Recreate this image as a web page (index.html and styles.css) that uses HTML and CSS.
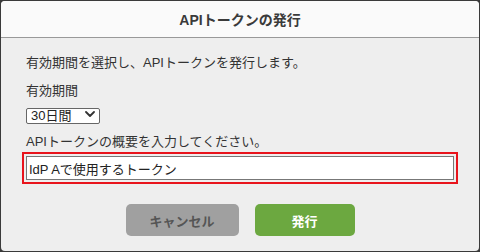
FILE: index.html
```html
<!DOCTYPE html>
<html>
	<head>
		<meta charset="UTF-8">
		<title>APIトークンの発行</title>
		<link rel="stylesheet" href="styles.css">
	</head>
	<body>
		<div class="dialog">
			<div class="dialog-header">APIトークンの発行</div>
			<form class="dialog-body" action="" method="post">
				<p class="line intro">有効期間を選択し、APIトークンを発行します。</p>
				<label class="line term-label" for="term">有効期間</label>
				<div class="select-wrap">
					<select id="term" name="term">
						<option>30日間</option>
						<option>60日間</option>
						<option>90日間</option>
					</select>
					<svg class="chevron" width="10" height="6" viewBox="0 0 10 6">
						<path d="M1 1 L5 5 L9 1" fill="none" stroke="#333" stroke-width="1.8" stroke-linecap="round" stroke-linejoin="round"/>
					</svg>
				</div>
				<label class="line desc-label" for="desc">APIトークンの概要を入力してください。</label>
				<div class="highlight">
					<input type="text" id="desc" name="desc" value="IdP Aで使用するトークン">
				</div>
				<div class="buttons">
					<button type="button" class="btn cancel">キャンセル</button>
					<button type="submit" class="btn submit">発行</button>
				</div>
			</form>
		</div>
	</body>
</html>
```

FILE: styles.css
```css
* {
	margin: 0;
	padding: 0;
	box-sizing: border-box;
}
body {
	background-color: #3a3a3a;
	font-family: "Liberation Sans", "Noto Sans CJK JP", sans-serif;
	color: #333;
}
.dialog {
	margin: 1px;
	width: 478px;
	height: 250px;
	border-radius: 4px;
	overflow: hidden;
	background-color: #eeeeee;
}
.dialog-header {
	height: 37px;
	display: flex;
	align-items: center;
	justify-content: center;
	background-color: #fafafa;
	border-bottom: 1px solid #999;
	font-size: 14px;
	font-weight: bold;
	color: #3a3a3a;
}
.dialog-body {
	display: flex;
	flex-direction: column;
	align-items: flex-start;
	padding: 16px 21px 0;
}
.line {
	display: block;
	margin-left: 4px;
	font-size: 13px;
	line-height: 18px;
}
.term-label {
	margin-top: 10px;
}
.select-wrap {
	position: relative;
	margin: 6px 0 0 4px;
	width: 74px;
	height: 16px;
}
.select-wrap select {
	appearance: none;
	-webkit-appearance: none;
	width: 74px;
	height: 16px;
	padding: 0 0 0 4px;
	border: 1px solid #666;
	border-radius: 2px;
	background-color: #fff;
	font-family: inherit;
	font-size: 13px;
	line-height: 14px;
	color: #222;
}
.chevron {
	position: absolute;
	left: 59px;
	top: 5px;
	pointer-events: none;
}
.desc-label {
	margin-top: 11px;
}
.highlight {
	margin-top: 1px;
	width: 436px;
	height: 32px;
	padding: 2px;
	border: 2px solid #e8141c;
}
.highlight input {
	display: block;
	width: 100%;
	height: 24px;
	padding: 0 2px;
	border: 1px solid #777;
	background-color: #fff;
	font-family: inherit;
	font-size: 13px;
	color: #222;
	outline: none;
}
.buttons {
	align-self: stretch;
	display: flex;
	justify-content: center;
	gap: 16px;
	margin-top: 20px;
}
.btn {
	height: 32px;
	border: none;
	border-radius: 5px;
	font-family: inherit;
	font-size: 13px;
	font-weight: bold;
	cursor: pointer;
}
.cancel {
	width: 113px;
	background-color: #a0a0a0;
	color: #555;
}
.submit {
	width: 100px;
	background-color: #6ca840;
	color: #fff;
}
```
